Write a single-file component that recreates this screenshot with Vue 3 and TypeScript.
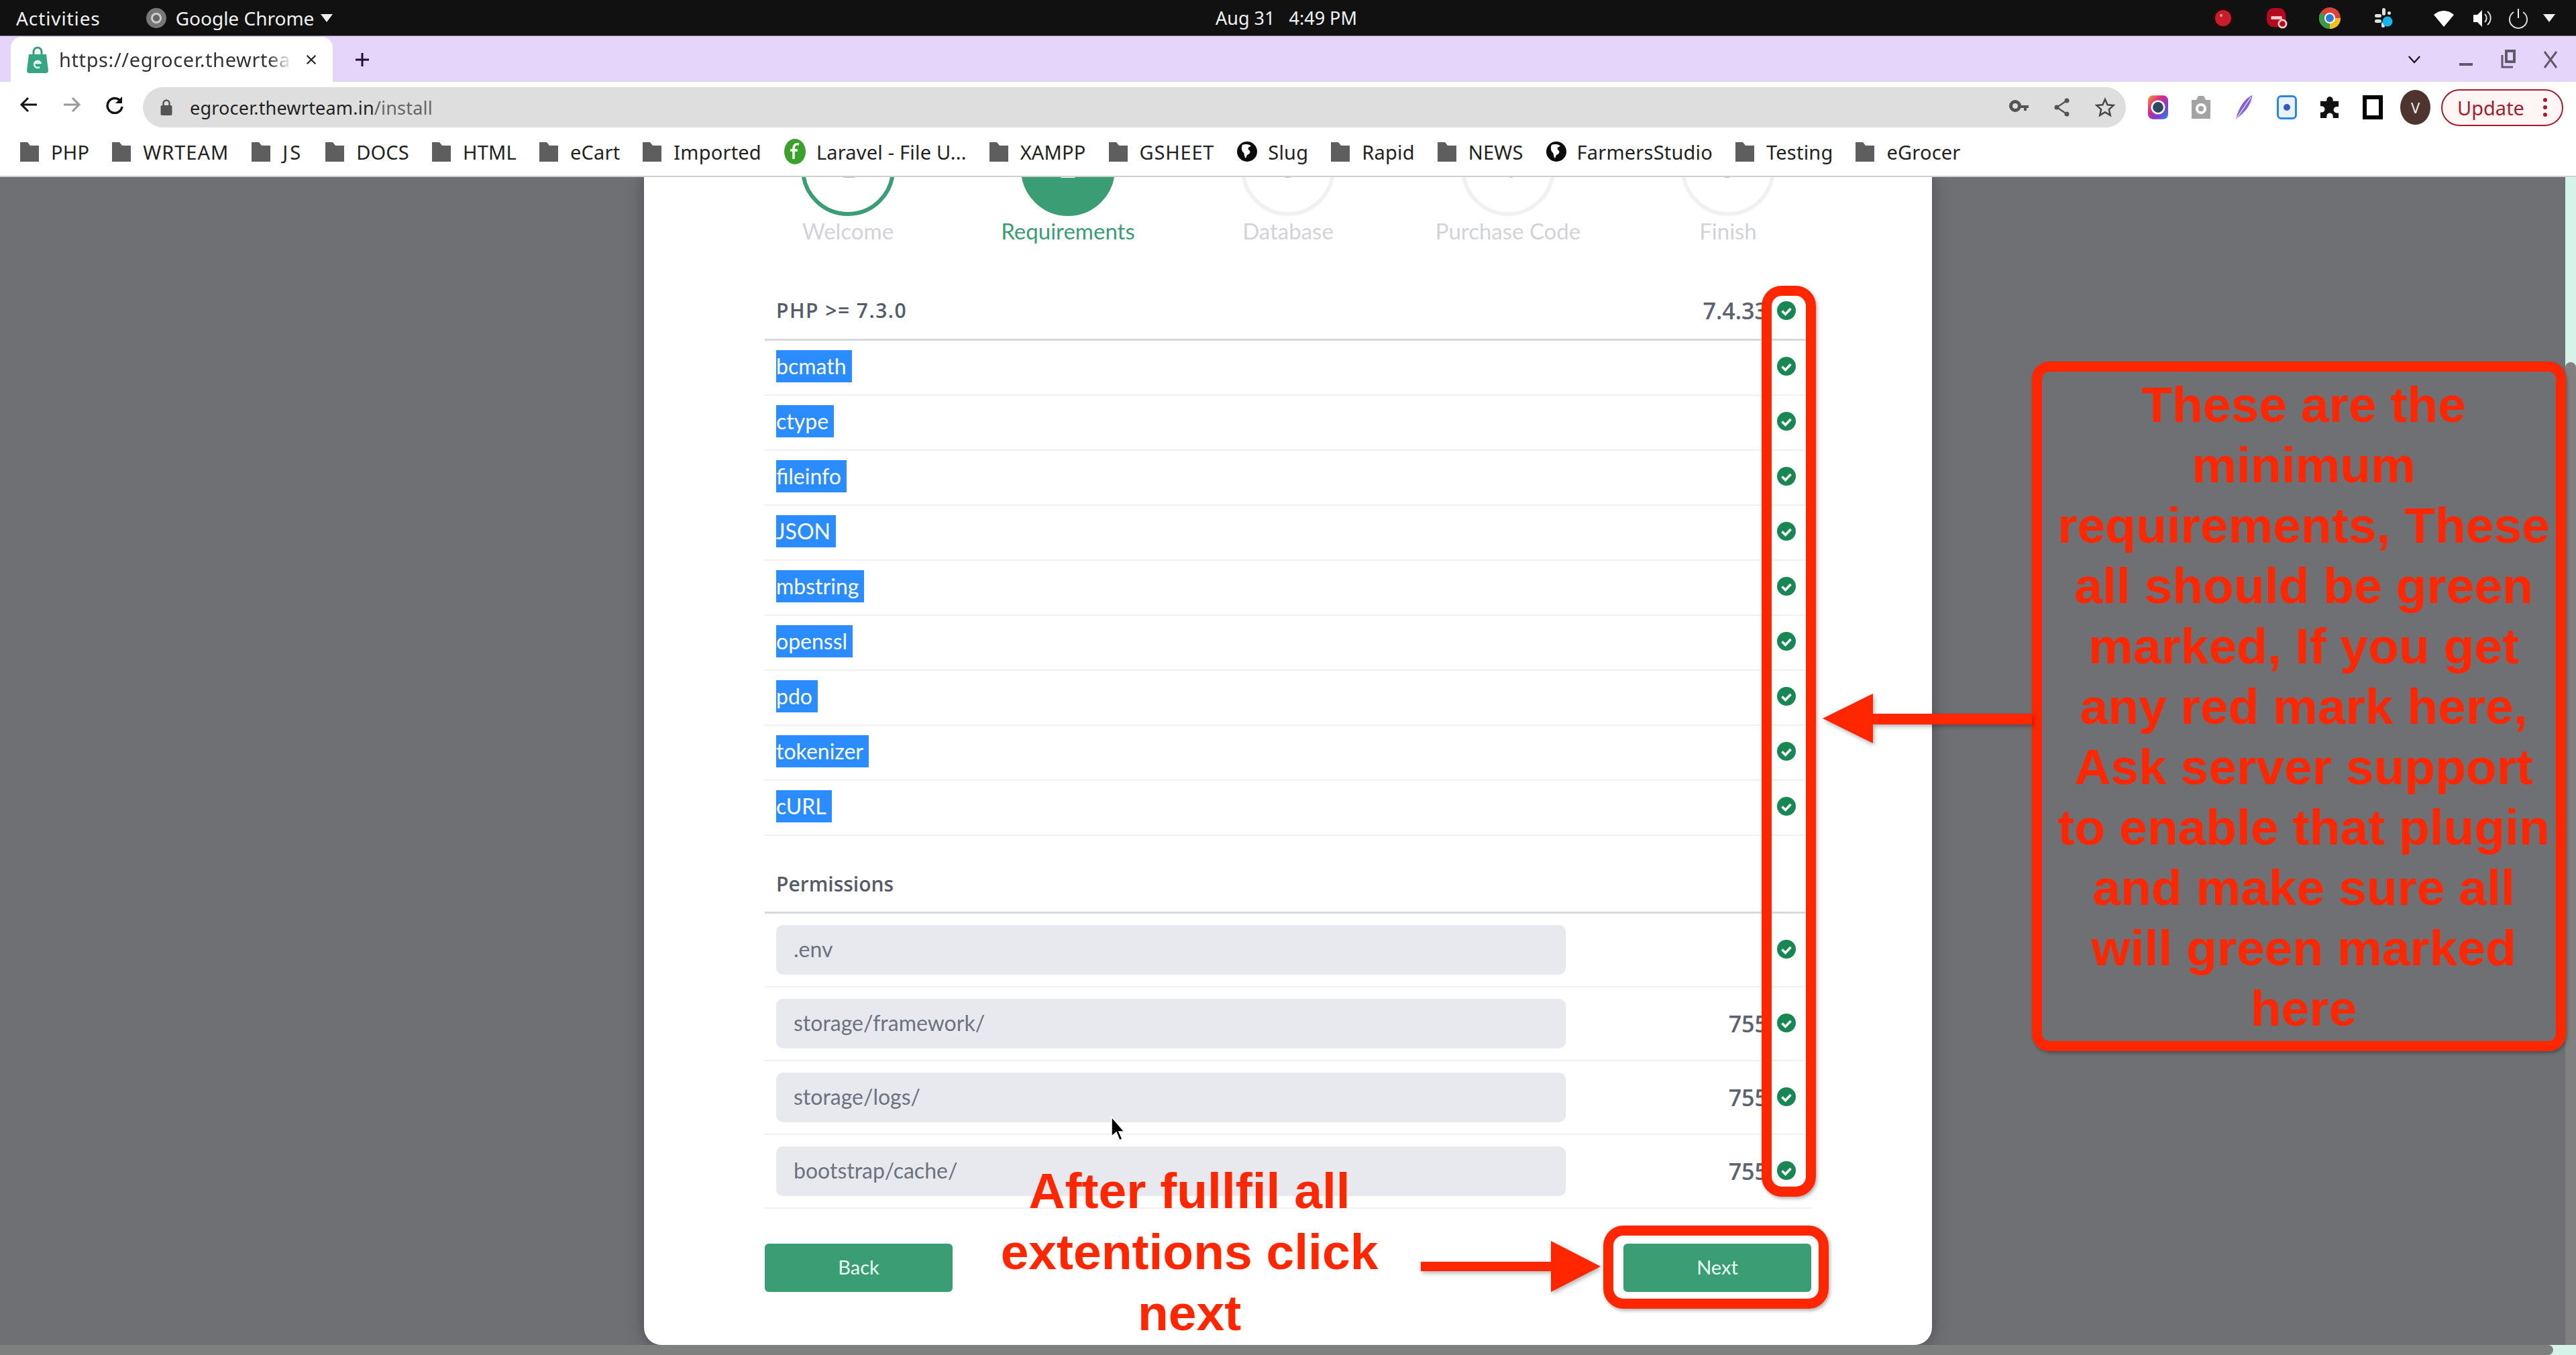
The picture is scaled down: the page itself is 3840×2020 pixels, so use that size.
<script setup lang="ts">
interface Bookmark {
  label: string
  icon: 'folder' | 'globe' | 'laravel'
}

const bookmarks: Bookmark[] = [
  { label: 'PHP', icon: 'folder' },
  { label: 'WRTEAM', icon: 'folder' },
  { label: 'JS', icon: 'folder' },
  { label: 'DOCS', icon: 'folder' },
  { label: 'HTML', icon: 'folder' },
  { label: 'eCart', icon: 'folder' },
  { label: 'Imported', icon: 'folder' },
  { label: 'Laravel - File U...', icon: 'laravel' },
  { label: 'XAMPP', icon: 'folder' },
  { label: 'GSHEET', icon: 'folder' },
  { label: 'Slug', icon: 'globe' },
  { label: 'Rapid', icon: 'folder' },
  { label: 'NEWS', icon: 'folder' },
  { label: 'FarmersStudio', icon: 'globe' },
  { label: 'Testing', icon: 'folder' },
  { label: 'eGrocer', icon: 'folder' }
]

const steps = [
  { label: 'Welcome', state: 'done' },
  { label: 'Requirements', state: 'active' },
  { label: 'Database', state: '' },
  { label: 'Purchase Code', state: '' },
  { label: 'Finish', state: '' }
]

const extensions = ['bcmath', 'ctype', 'fileinfo', 'JSON', 'mbstring', 'openssl', 'pdo', 'tokenizer', 'cURL']

const permissions = [
  { path: '.env', mode: '' },
  { path: 'storage/framework/', mode: '755' },
  { path: 'storage/logs/', mode: '755' },
  { path: 'bootstrap/cache/', mode: '755' }
]
</script>

<template>
  <div class="screen">
    <div class="topbar">
      <span class="top-activities">Activities</span>
      <span class="top-app">
        <svg class="app-icon" viewBox="0 0 30 30"><circle cx="15" cy="15" r="15" fill="#777" /><circle cx="15" cy="15" r="8" fill="#ccc" /><circle cx="15" cy="15" r="5" fill="#666" /></svg>
        Google Chrome
        <i class="caret"></i>
      </span>
      <span class="top-clock">Aug 31&nbsp;&nbsp;&nbsp;4:49 PM</span>
      <div class="tray">
        <svg viewBox="0 0 32 32" class="tray-rec"><circle cx="16" cy="16" r="15" fill="#2a0a0c" /><circle cx="16" cy="16" r="12" fill="#c81e2c" /><circle cx="13" cy="12" r="2" fill="#f0a0a0" /></svg>
        <svg viewBox="0 0 34 34" class="tray-min"><rect x="1" y="1" width="30" height="30" rx="11" fill="#b5091f" /><rect x="8" y="14" width="17" height="5" fill="#f3d0d0" /><circle cx="26" cy="26" r="6" fill="#b5091f" stroke="#f7c9c9" stroke-width="3" /></svg>
        <svg viewBox="0 0 32 32" class="tray-chrome"><circle cx="16" cy="16" r="16" fill="#d8433a" /><path d="M16 16 2 24a16 16 0 0 1 0-16Z" fill="#3a9a49" /><path d="M16 32a16 16 0 0 1-14-8l14-8 8 14Z" fill="#3a9a49" /><path d="M16 16h16a16 16 0 0 1-8 14 16 16 0 0 1-8 2Z" fill="#f2c01e" /><circle cx="16" cy="16" r="8" fill="#fff" /><circle cx="16" cy="16" r="6" fill="#2f78dc" /></svg>
        <svg viewBox="0 0 32 32" class="tray-slack"><g fill="#dfe3e6"><rect x="13" y="1" width="5" height="11" rx="2.5" /><rect x="2" y="10" width="10" height="5" rx="2.5" /><rect x="2" y="18" width="10" height="5" rx="2.5" /><rect x="21" y="6" width="5" height="5" rx="2.5" /><rect x="12" y="22" width="5" height="8" rx="2.5" /></g><circle cx="21" cy="21" r="7.5" fill="#12b5ee" /></svg>
        <svg viewBox="0 0 32 32" class="tray-wifi"><path d="M1 11C10 3 22 3 31 11L16 29Z" fill="#fff" /></svg>
        <svg viewBox="0 0 32 32" class="tray-sound"><path d="M3 11h6l7-7v25l-7-7H3Z" fill="#fff" /><path d="M20 10a8 8 0 0 1 0 12M24 6a13 13 0 0 1 0 20" fill="none" stroke="#ddd" stroke-width="2" /></svg>
        <svg viewBox="0 0 32 32" class="tray-power"><path d="M9 7a13 13 0 1 0 14 0" fill="none" stroke="#ddd" stroke-width="2" /><path d="M16 2v14" stroke="#eee" stroke-width="2" /></svg>
        <i class="caret tray-caret"></i>
      </div>
    </div>

    <div class="tabstrip">
      <div class="tab">
        <svg class="favicon" viewBox="0 0 32 40"><path d="M10 12V8a6 6 0 0 1 12 0v4" fill="none" stroke="#2f9d78" stroke-width="3" /><path d="M3 12h26l3 24a4 4 0 0 1-4 4H4a4 4 0 0 1-4-4Z" fill="#35a583" /><path d="M21 26a5 5 0 1 0-2 5M11 25h10" fill="none" stroke="#e8fff6" stroke-width="2.5" /></svg>
        <span class="tab-title">https://egrocer.thewrteam.in/install</span>
        <svg class="tab-close" viewBox="0 0 20 20"><path d="M3 3l14 14M17 3 3 17" stroke="#222" stroke-width="2.4" /></svg>
      </div>
      <svg class="tab-new" viewBox="0 0 24 24"><path d="M12 2v20M2 12h20" stroke="#1d1033" stroke-width="3" /></svg>
      <div class="win-controls">
        <svg viewBox="0 0 22 14" class="win-chevron"><path d="M2 2l9 10 9-10" fill="none" stroke="#1f1a2a" stroke-width="2.6" /></svg>
        <svg viewBox="0 0 22 22" class="win-btn"><path d="M1 18h20" stroke="#5f5a6b" stroke-width="4" /></svg>
        <svg viewBox="0 0 22 30" class="win-btn"><rect x="8" y="2" width="12" height="16" fill="none" stroke="#5f5a6b" stroke-width="4" /><path d="M2 8v18h16" fill="none" stroke="#5f5a6b" stroke-width="3" /></svg>
        <svg viewBox="0 0 22 30" class="win-btn"><path d="M2 3l18 24M20 3 2 27" stroke="#5f5a6b" stroke-width="3" /></svg>
      </div>
    </div>

    <div class="toolbar">
      <svg class="nav-icon" viewBox="0 0 28 28"><path d="M26 14H4M13 4 3 14l10 10" fill="none" stroke="#111" stroke-width="3" /></svg>
      <svg class="nav-icon" viewBox="0 0 28 28"><path d="M2 14h22M15 4l10 10-10 10" fill="none" stroke="#999" stroke-width="3" /></svg>
      <svg class="nav-icon" viewBox="0 0 28 28"><path d="M23 9a11 11 0 1 0 2 8" fill="none" stroke="#111" stroke-width="3.4" /><path d="M25 2v10H15Z" fill="#111" /></svg>
      <div class="omnibox">
        <svg class="lock" viewBox="0 0 18 26"><path d="M4.500 11V7a4.500 4.500 0 0 1 9 0v4" fill="none" stroke="#555" stroke-width="2.400" /><rect x="0.500" y="10" width="17" height="15" rx="2" fill="#555" /></svg>
        <span class="url">egrocer.thewrteam.in<span class="url-path">/install</span></span>
        <div class="omni-actions">
          <svg viewBox="0 0 30 30"><circle cx="9" cy="13" r="6.500" fill="none" stroke="#555" stroke-width="5" /><path d="M15 12h14v4h-3v4h-4v-4h-7Z" fill="#555" /></svg>
          <svg viewBox="0 0 30 30"><path d="M22 5 7 15l15 10" fill="none" stroke="#555" stroke-width="2.400" /><circle cx="22" cy="5" r="3.500" fill="#555" /><circle cx="7" cy="15" r="3.500" fill="#555" /><circle cx="22" cy="25" r="3.500" fill="#555" /></svg>
          <svg viewBox="0 0 30 30"><path d="m15 3 3.600 8.300 9 .8-6.800 6 2 8.800-7.800-4.700-7.800 4.700 2-8.800-6.800-6 9-.8Z" fill="none" stroke="#444" stroke-width="2.400" /></svg>
        </div>
      </div>
      <div class="extensions">
        <svg viewBox="0 0 34 40"><defs><linearGradient id="rainbow" x1="0" y1="0" x2="1" y2="1"><stop offset="0" stop-color="#f0a020" /><stop offset=".35" stop-color="#e0288c" /><stop offset=".7" stop-color="#7a3fd0" /><stop offset="1" stop-color="#2090e0" /></linearGradient></defs><rect width="34" height="40" rx="8" fill="url(#rainbow)" /><circle cx="17" cy="20" r="12" fill="#fff" /><circle cx="17" cy="20" r="9" fill="#2c4a5c" /></svg>
        <svg viewBox="0 0 30 38"><path d="M1 8h7l3-6h8l3 6h7v28H1Z" fill="#a3a3a3" /><circle cx="15" cy="21" r="8" fill="#fff" /><circle cx="15" cy="21" r="4" fill="#a3a3a3" /></svg>
        <svg viewBox="0 0 30 40"><path d="M28 1C16 6 7 20 2 39 12 31 26 20 28 1Z" fill="#8660d0" /><path d="M26 4 3 38" stroke="#e4dcf5" stroke-width="1.500" /></svg>
        <svg viewBox="0 0 30 36"><rect x="1.500" y="1.500" width="27" height="33" rx="5" fill="#e8f2fd" stroke="#2a86e0" stroke-width="3" /><circle cx="15" cy="18" r="5" fill="#3a56c0" /></svg>
        <svg viewBox="0 0 32 36"><path d="M11 8V6a5 5 0 0 1 10 0v2h9v9h-3a5 5 0 0 0 0 10h3v8H21v-3a5 5 0 0 0-10 0v3H1V26h2a5 5 0 0 0 0-10H1V8Z" fill="#111" /></svg>
        <svg viewBox="0 0 30 36"><rect x="3" y="3" width="24" height="30" fill="none" stroke="#000" stroke-width="6" /></svg>
        <span class="avatar">V</span>
      </div>
      <div class="update">
        <span>Update</span>
        <svg viewBox="0 0 6 28"><circle cx="3" cy="3" r="3" fill="#a51d2d" /><circle cx="3" cy="14" r="3" fill="#a51d2d" /><circle cx="3" cy="25" r="3" fill="#a51d2d" /></svg>
      </div>
    </div>

    <div class="bookmarks">
      <span v-for="b in bookmarks" :key="b.label" class="bookmark">
        <svg v-if="b.icon === 'folder'" class="bm-folder" viewBox="0 0 28 30"><path d="M0 1h11l4 5h13v24H0Z" fill="#5e5e5e" /></svg>
        <svg v-else-if="b.icon === 'globe'" class="bm-globe" viewBox="0 0 30 30"><circle cx="15" cy="15" r="15" fill="#0c0c0c" /><path d="M8 5c5-2 11-1 13 2-4 1-6 3-3 6 3 2 1 6-3 7l-2 5c-3-3-1-7-4-9-2-2-3-7-1-11Z" fill="#fff" /></svg>
        <svg v-else class="bm-laravel" viewBox="0 0 32 38"><ellipse cx="16" cy="19" rx="16" ry="19" fill="#3aa22b" /><path d="M22 8c-6-1-8 2-8 7v15M9 17h11" fill="none" stroke="#fff" stroke-width="3.500" /></svg>
        <span>{{ b.label }}</span>
      </span>
    </div>

    <div class="page">
      <div class="viewport">
        <main class="card">
          <ol class="steps">
            <li v-for="(s, i) in steps" :key="s.label" class="step" :class="s.state">
              <span class="step-dot">{{ i + 1 }}</span>
              <span class="step-label">{{ s.label }}</span>
            </li>
          </ol>

          <div class="row row-head">
            <span class="row-name php-name">PHP &gt;= 7.3.0</span>
            <span class="row-value">7.4.33</span>
            <svg class="ok" viewBox="0 0 28 28"><circle cx="14" cy="14" r="14" fill="#198754" /><path d="m7.500 14.500 5 5 8-8.500" fill="none" stroke="#fff" stroke-width="3.600" /></svg>
          </div>
          <div v-for="ext in extensions" :key="ext" class="row row-ext">
            <span class="selected">{{ ext }}</span>
            <svg class="ok" viewBox="0 0 28 28"><circle cx="14" cy="14" r="14" fill="#198754" /><path d="m7.500 14.500 5 5 8-8.500" fill="none" stroke="#fff" stroke-width="3.600" /></svg>
          </div>

          <div class="row row-head perm-head">
            <span class="row-name">Permissions</span>
          </div>
          <div v-for="p in permissions" :key="p.path" class="row row-perm">
            <div class="path-input">{{ p.path }}</div>
            <span class="row-value">{{ p.mode }}</span>
            <svg class="ok" viewBox="0 0 28 28"><circle cx="14" cy="14" r="14" fill="#198754" /><path d="m7.500 14.500 5 5 8-8.500" fill="none" stroke="#fff" stroke-width="3.600" /></svg>
          </div>

          <div class="actions">
            <button class="btn">Back</button>
            <button class="btn">Next</button>
          </div>
        </main>
      </div>
      <div class="vscroll"><div class="vthumb"></div></div>
    </div>
    <div class="hscroll"><div class="hthumb"></div></div>

    <!-- annotations drawn over the screenshot -->
    <div class="mark mark-column"></div>
    <div class="mark mark-next"></div>
    <div class="mark callout">These are the minimum requirements, These all should be green marked, If you get any red mark here, Ask server support to enable that plugin and make sure all will green marked here</div>
    <div class="note-next">After fullfil all extentions click next</div>
    <svg class="arrows" viewBox="0 0 3840 2020">
      <path d="M2118 1881h194v-31l74 38-74 38v-31h-194Z" />
      <path d="M3029 1064H2792v-30l-75 37 75 37v-28h237Z" />
    </svg>
    <svg class="pointer" viewBox="0 0 22 38"><path d="M2 1v29l7-6 5 12 4-2-5-11h8Z" fill="#000" stroke="#fff" stroke-width="1.500" /></svg>
  </div>
</template>

<style scoped>
.screen {
  position: relative;
  width: 3840px;
  height: 2020px;
  display: flex;
  flex-direction: column;
  overflow: hidden;
  background: #fff;
  font-family: "Noto Sans", sans-serif;
}

/* GNOME top bar */
.topbar {
  position: relative;
  height: 53px;
  flex: none;
  display: flex;
  align-items: center;
  padding-left: 24px;
  background: #111;
  color: #f2f2f2;
  font-size: 28px;
}

.top-activities {
  letter-spacing: 0.9px;
}

.top-app {
  display: flex;
  align-items: center;
  margin-left: 68px;
}

.app-icon {
  width: 30px;
  height: 32px;
  margin-right: 14px;
}

.caret {
  width: 0;
  height: 0;
  margin-left: 10px;
  border-left: 9px solid transparent;
  border-right: 9px solid transparent;
  border-top: 12px solid #eee;
}

.top-clock {
  position: absolute;
  left: 1812px;
  font-size: 27px;
}

.tray {
  margin-left: auto;
  display: flex;
  align-items: center;
  padding-right: 31px;
}

.tray svg {
  height: 32px;
  width: 32px;
}

.tray-min {
  margin-left: 48px;
}

.tray-chrome {
  margin-left: 47px;
}

.tray-slack {
  margin-left: 49px;
}

.tray-wifi {
  margin-left: 57px;
}

.tray-sound {
  margin-left: 25px;
}

.tray-power {
  margin-left: 22px;
}

.tray-caret {
  margin-left: 21px;
}

/* Chrome window */
.tabstrip {
  height: 69px;
  flex: none;
  display: flex;
  align-items: flex-end;
  background: #e6d5fb;
  border-top: 1px solid #8a7aa0;
  box-sizing: border-box;
}

.tab {
  width: 480px;
  height: 67px;
  margin-left: 16px;
  display: flex;
  align-items: center;
  padding-left: 24px;
  box-sizing: border-box;
  border-radius: 16px 16px 0 0;
  background: #fff;
}

.favicon {
  width: 32px;
  height: 40px;
  flex: none;
}

.tab-title {
  width: 347px;
  margin-left: 16px;
  overflow: hidden;
  white-space: nowrap;
  font-size: 29px;
  letter-spacing: 0.6px;
  color: #333;
  -webkit-mask-image: linear-gradient(to right, #000 90%, transparent);
  mask-image: linear-gradient(to right, #000 90%, transparent);
}

.tab-close {
  width: 18px;
  height: 20px;
  margin-left: 20px;
}

.tab-new {
  width: 24px;
  height: 26px;
  margin: 0 0 20px 32px;
}

.win-controls {
  margin-left: auto;
  display: flex;
  align-items: center;
  height: 67px;
  padding-right: 27px;
}

.win-chevron {
  width: 20px;
  height: 13px;
  margin-right: 56px;
}

.win-btn {
  width: 22px;
  height: 30px;
  margin-left: 41px;
}

.win-chevron + .win-btn {
  margin-left: 0;
}

.toolbar {
  height: 68px;
  flex: none;
  display: flex;
  align-items: center;
  padding-left: 28px;
  box-sizing: border-box;
  background: #fff;
}

.nav-icon {
  width: 30px;
  height: 28px;
  margin-right: 34px;
}

.omnibox {
  width: 2956px;
  height: 60px;
  margin-left: -7px;
  margin-top: 8px;
  display: flex;
  align-items: center;
  padding: 0 16px 0 26px;
  box-sizing: border-box;
  border-radius: 30px;
  background: #dedede;
}

.lock {
  width: 18px;
  height: 26px;
}

.url {
  margin-left: 26px;
  font-size: 27px;
  color: #222;
  letter-spacing: 0.2px;
}

.url-path {
  color: #666;
}

.omni-actions {
  margin-left: auto;
  display: flex;
  gap: 34px;
}

.omni-actions svg {
  width: 30px;
  height: 30px;
}

.extensions {
  display: flex;
  align-items: center;
  gap: 34px;
  margin-left: 33px;
  margin-top: 8px;
}

.extensions svg {
  width: 30px;
  height: 38px;
}

.avatar {
  width: 45px;
  height: 52px;
  margin-left: -8px;
  display: flex;
  align-items: center;
  justify-content: center;
  border-radius: 50%;
  background: #4e342e;
  color: #eee;
  font-size: 22px;
}

.update {
  width: 182px;
  height: 55px;
  margin-left: 16px;
  margin-top: 8px;
  display: flex;
  align-items: center;
  justify-content: space-between;
  padding: 0 22px;
  box-sizing: border-box;
  border: 2px solid #a51d2d;
  border-radius: 28px;
  background: #fff5f5;
  color: #a51d2d;
  font-size: 29px;
}

.update svg {
  width: 6px;
  height: 28px;
}

.bookmarks {
  height: 74px;
  flex: none;
  display: flex;
  align-items: center;
  gap: 34px;
  padding-left: 30px;
  box-sizing: border-box;
  border-bottom: 2px solid #cfcfcf;
  font-size: 29px;
  letter-spacing: 0.2px;
  color: #222;
}

.bookmark {
  display: flex;
  align-items: center;
  gap: 18px;
  white-space: nowrap;
}

.bookmark:nth-child(2) {
  letter-spacing: 1px;
}

.bookmark:nth-child(3) {
  letter-spacing: 3px;
}

.bookmark:nth-child(10) {
  letter-spacing: 0.8px;
}

.bm-folder {
  width: 28px;
  height: 30px;
}

.bm-globe {
  width: 30px;
  height: 30px;
  margin-right: -2px;
}

.bm-laravel {
  width: 32px;
  height: 38px;
  margin-right: -2px;
}

.page {
  flex: 1;
  min-height: 0;
  display: flex;
}

.viewport {
  flex: 1;
  overflow: hidden;
  background: #6f7074;
}

.card {
  display: flow-root;
  width: 1920px;
  height: 100%;
  margin-left: 960px;
  padding: 0 180px;
  box-sizing: border-box;
  border-radius: 0 0 26px 26px;
  background: #fff;
  box-shadow: 0 0 24px rgba(0, 0, 0, 0.35);
  font-family: Lato, sans-serif;
  color: #555b68;
  font-size: 32px;
}

.steps {
  display: flex;
  margin: -82px -40px 54px;
  padding: 0;
  list-style: none;
}

.step {
  width: 328px;
  display: flex;
  flex-direction: column;
  align-items: center;
}

.step-dot {
  width: 140px;
  height: 140px;
  display: flex;
  align-items: center;
  justify-content: center;
  padding-bottom: 8px;
  box-sizing: border-box;
  border: 6px solid #f1f1f1;
  border-radius: 50%;
  color: #bbb;
  font-size: 44px;
}

.step-label {
  margin-top: 2px;
  font-size: 33px;
  line-height: 40px;
  color: #d2d3d8;
}

.step.done .step-dot {
  border-color: #3a9d74;
}

.step.active .step-dot {
  border-color: #3a9d74;
  background: #3a9d74;
  color: #fff;
}

.step.active .step-label {
  color: #3a9d74;
}

.row {
  display: flex;
  align-items: center;
  padding: 0 23px 0 17px;
  box-sizing: border-box;
  border-bottom: 2px solid #f0f0f2;
}

.row-head {
  height: 90px;
  padding-top: 2px;
  border-bottom: 3px solid #d7d8da;
}

.row-name,
.row-value {
  font-family: "Open Sans", sans-serif;
  font-size: 30px;
  font-weight: 600;
}

.php-name {
  letter-spacing: 1.5px;
}

.row-ext {
  height: 82px;
  padding-bottom: 4px;
}

.selected {
  height: 48px;
  padding-right: 8px;
  line-height: 48px;
  background: #2b8cff;
  color: #fff;
}

.row-value {
  margin-left: auto;
  font-size: 34px;
  color: #5c6270;
}

.ok {
  width: 28px;
  height: 28px;
  flex: none;
  margin-left: auto;
}

.row-value + .ok {
  margin-left: 14px;
}

.perm-head {
  height: 88px;
  margin-top: 28px;
  padding-top: 2px;
}

.row-perm {
  height: 110px;
}

.row-perm .ok {
  margin-top: -3px;
}

.path-input {
  width: 1177px;
  height: 74px;
  padding-left: 26px;
  box-sizing: border-box;
  line-height: 72px;
  border-radius: 10px;
  background: #e8e9ee;
  color: #6b7280;
}

.actions {
  display: flex;
  justify-content: space-between;
  margin-top: 52px;
}

.btn {
  width: 280px;
  height: 72px;
  padding-bottom: 4px;
  border: none;
  border-radius: 6px;
  background: #3a9d74;
  color: #eafff5;
  font-family: inherit;
  font-size: 29px;
}

.vscroll {
  width: 16px;
  flex: none;
  display: flex;
  flex-direction: column;
  background: #d6f3e9;
}

.vthumb {
  flex: 1;
  margin-top: 276px;
  border-radius: 8px 8px 0 0;
  background: #808080;
}

.hscroll {
  height: 15px;
  flex: none;
  background: #d6f3e9;
}

.hthumb {
  width: 3806px;
  height: 100%;
  border-radius: 0 8px 8px 0;
  background: #7e8080;
}

/* red annotations */
.mark {
  position: absolute;
  box-sizing: border-box;
  border: 15px solid #ff2600;
  box-shadow: 2px 3px 5px rgba(0, 0, 0, 0.3);
}

.mark-column {
  left: 2626px;
  top: 426px;
  width: 81px;
  height: 1358px;
  border-radius: 30px;
}

.mark-next {
  left: 2390px;
  top: 1827px;
  width: 336px;
  height: 124px;
  border-radius: 30px;
}

.callout {
  left: 3029px;
  top: 539px;
  width: 796px;
  height: 1028px;
  display: flex;
  align-items: center;
  justify-content: center;
  padding-left: 14px;
  border-radius: 26px;
  font-family: "Liberation Sans", Arial, sans-serif;
  font-size: 75px;
  font-weight: 700;
  line-height: 90px;
  text-align: center;
  color: #ff2600;
}

.note-next {
  position: absolute;
  left: 1473px;
  top: 1730px;
  width: 600px;
  font-family: "Liberation Sans", Arial, sans-serif;
  font-size: 75px;
  font-weight: 700;
  line-height: 91px;
  text-align: center;
  color: #ff2600;
}

.arrows {
  position: absolute;
  left: 0;
  top: 0;
  width: 3840px;
  height: 2020px;
  fill: #ff2600;
  pointer-events: none;
  filter: drop-shadow(2px 3px 3px rgba(0, 0, 0, 0.3));
}

.pointer {
  position: absolute;
  left: 1655px;
  top: 1664px;
  width: 22px;
  height: 38px;
}
</style>
